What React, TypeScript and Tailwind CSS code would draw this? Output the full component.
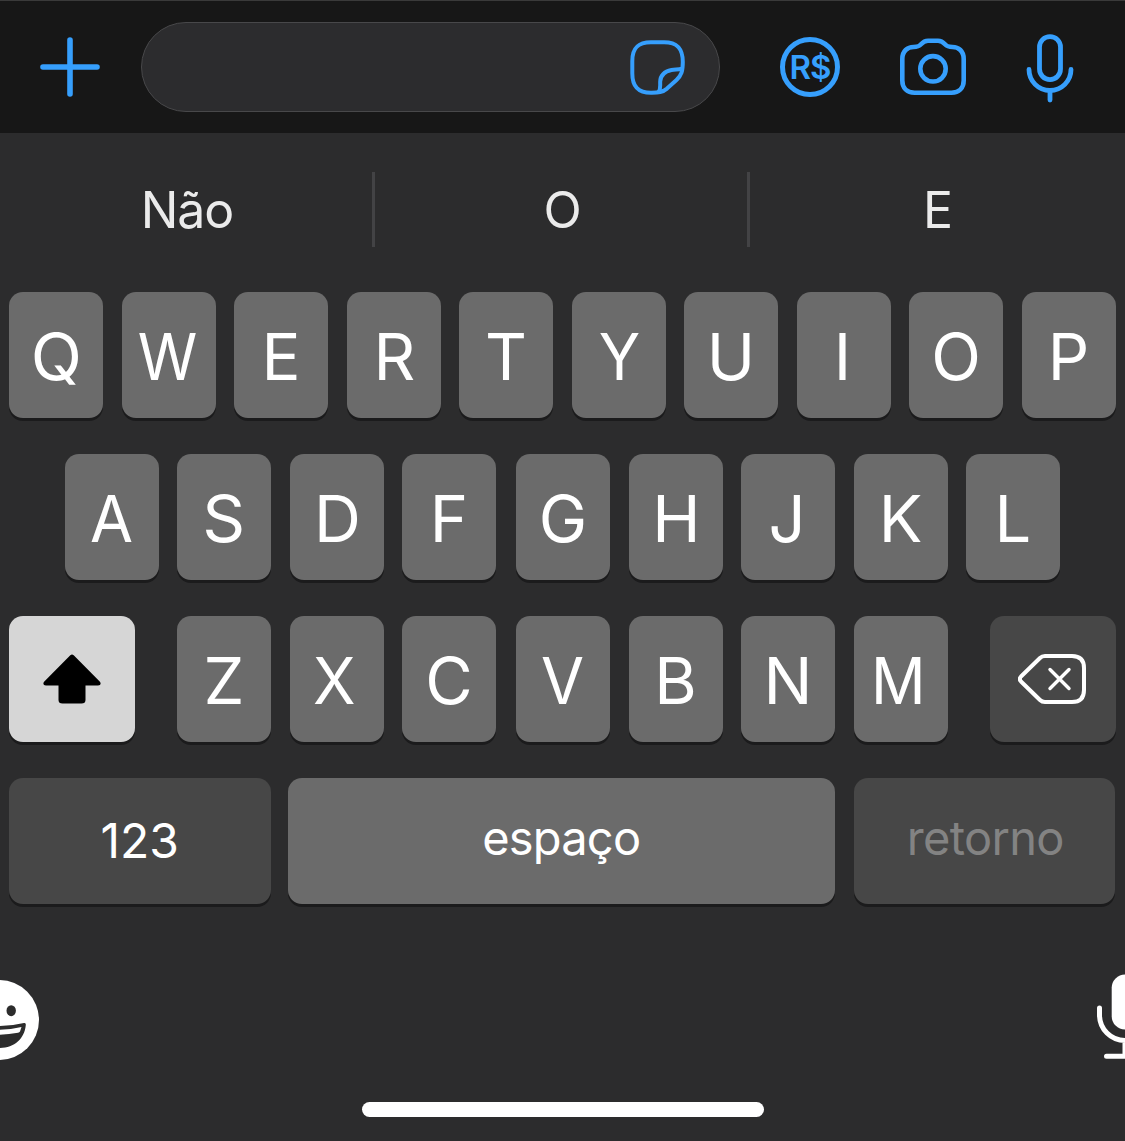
import { ReactNode } from "react";
import clsx from "clsx";

const suggestions = ["Não", "O", "E"];
const topRow = ["Q", "W", "E", "R", "T", "Y", "U", "I", "O", "P"];

const glyphAdjust: Record<string, string> = {
  Q: "translate-x-[0.5px] scale-x-[1.03]",
  W: "-translate-x-[0.5px] scale-x-[0.93]",
  R: "translate-x-px",
  Y: "translate-x-[1.5px] scale-x-[0.94]",
  I: "-translate-x-px",
  A: "scale-x-[0.96]",
  S: "scale-x-[1.03]",
  D: "translate-x-px",
  H: "translate-x-px",
  J: "-translate-x-px",
  X: "-translate-x-[2px] scale-x-[0.96]",
  V: "-translate-x-px scale-x-[0.96]",
  M: "-translate-x-[2px] scale-x-[0.93]",
};

interface KeyProps {
  children: ReactNode;
  className?: string;
}

function Key({ children, className }: KeyProps) {
  return (
    <button
      className={clsx(
        "flex h-[126px] shrink-0 items-center justify-center rounded-[14px] shadow-[0_3px_0_#1b1b1c]",
        className
      )}
    >
      {children}
    </button>
  );
}

function LetterKey({ letter }: { letter: string }) {
  return (
    <Key className="w-[94px] bg-[#6b6b6b] pt-[3px] text-[65px] leading-none">
      <span className={glyphAdjust[letter]}>{letter}</span>
    </Key>
  );
}

function LetterGroup({ letters }: { letters: string[] }) {
  return (
    <div className="flex gap-[18.5px]">
      {letters.map((letter) => (
        <LetterKey key={letter} letter={letter} />
      ))}
    </div>
  );
}

function PlusIcon() {
  return (
    <svg width="60" height="60" viewBox="0 0 60 60" fill="none" stroke="currentColor" strokeWidth="5.6" strokeLinecap="round">
      <path d="M30 3v54M3 30h54" />
    </svg>
  );
}

function StickerIcon() {
  return (
    <svg width="56" height="56" viewBox="0 0 56 56" fill="none" stroke="currentColor" strokeWidth="4" strokeLinejoin="round">
      <path d="M52.8 22C52.8 8.5 47.5 2.3 34 2.3H21C7.5 2.3 2.3 8.5 2.3 21V33.5C2.3 47 8.5 52.8 21 52.8C28.5 52.9 32.5 52.3 37 48.6L46.5 40C51.5 35.3 52.8 31 52.8 22Z" />
      <path d="M52 28.8C47.5 30 45.5 29.2 41.5 30C34.5 31.500 30.500 35.500 30.200 41.500C30 46.500 31 48.500 28.500 52.300" />
    </svg>
  );
}

function CameraIcon() {
  return (
    <svg width="66" height="58" viewBox="0 0 66 58" fill="none" stroke="currentColor" strokeWidth="4.6">
      <path d="M2.3 22.500C2.3 14.500 7.5 10.500 13.5 10.500C18 10.500 19 10 21 7.800C23.5 5 25 4.300 28 4.300H38C41 4.300 42.5 5 45 7.800C47 10 48 10.500 52.5 10.500C58.5 10.500 63.7 14.500 63.7 22.500V44C63.7 51.500 59 56.200 51.500 56.200H14.5C7 56.200 2.3 51.500 2.3 44Z" transform="translate(0 -0.5)" />
      <circle cx="33" cy="31.8" r="12.7" />
    </svg>
  );
}

function MicIcon() {
  return (
    <svg width="48" height="70" viewBox="0 0 48 70" fill="none" stroke="currentColor" strokeWidth="4.8" strokeLinecap="round">
      <rect x="13.5" y="2.6" width="21" height="43" rx="10.500" />
      <path d="M3 35.5a21 21 0 0 0 42 0M24 57v9" />
    </svg>
  );
}

function ShiftIcon() {
  return (
    <svg width="58" height="50" viewBox="0 0 58 50" fill="#000">
      <path d="M27.3 1.3Q29 -0.3 30.7 1.3L56.7 27.5C58.5 29.6 57.5 31.5 55 31.5H42.5V46Q42.5 49.5 38.5 49.5H19.500Q15.5 49.5 15.5 46V31.5H3C0.5 31.5 -0.5 29.6 1.3 27.5Z" />
    </svg>
  );
}

function DeleteIcon() {
  return (
    <svg width="68" height="50" viewBox="0 0 68 50" fill="none" stroke="currentColor" strokeLinecap="round" strokeLinejoin="round">
      <path strokeWidth="4" d="M27 2H54Q66 2 66 14V36Q66 48 54 48H27Q24 48 22 46L3 27.5Q0.7 25 3 22.5L22 4Q24 2 27 2Z" />
      <path strokeWidth="3.4" d="M32 15.5l19 19M51 15.5l-19 19" />
    </svg>
  );
}

function EmojiIcon() {
  return (
    <svg width="80" height="80" viewBox="0 0 80 80">
      <circle cx="40" cy="40" r="40" fill="#fff" />
      <ellipse cx="29.5" cy="30.7" rx="4.7" ry="5.5" fill="#2c2c2c" />
      <ellipse cx="52.2" cy="30.7" rx="4.7" ry="5.5" fill="#2c2c2c" />
      <path fill="#2c2c2c" d="M15 43Q40 49 65 43Q67 42.5 66.8 45C65.5 59 55 68 40 68C25 68 14.5 59 13.2 45Q13 42.5 15 43Z" />
      <path fill="#fff" d="M17.5 47Q40 52.5 62.5 47L61 51.5Q60.5 52.5 59 52.8Q40 56.5 21 52.8Q19.5 52.5 19 51.5Z" />
    </svg>
  );
}

function DictationIcon() {
  return (
    <svg width="56" height="86" viewBox="0 0 56 86" fill="none" stroke="currentColor" strokeWidth="5" strokeLinecap="round">
      <rect x="14.7" y="0.5" width="26.6" height="55" rx="13.3" fill="currentColor" stroke="none" />
      <path d="M2.5 34V41a25.5 25.5 0 0 0 51 0V34M28 67v14M9.5 82.2h37" />
    </svg>
  );
}

function Toolbar() {
  return (
    <div className="flex h-[133px] items-start border-t border-[#3a3a3a] bg-[#171717] pl-10 text-[#369ffd]">
      <div className="mt-9">
        <PlusIcon />
      </div>
      <div className="mt-[21px] ml-[41px] flex h-[90px] w-[579px] items-start justify-end rounded-full border border-[#48484a] bg-[#2c2c2e] pt-[17px] pr-[33px]">
        <StickerIcon />
      </div>
      <div className="mt-9 ml-[60px] flex size-[60px] items-center justify-center rounded-full border-[5px] border-current pt-px text-[33px] leading-none font-semibold tracking-[-1px]">
        R$
      </div>
      <div className="mt-9 ml-[60px]">
        <CameraIcon />
      </div>
      <div className="mt-[33px] ml-[60px]">
        <MicIcon />
      </div>
    </div>
  );
}

function Suggestions() {
  return (
    <div className="mt-[39px] flex h-[75px]">
      {suggestions.map((word, index) => (
        <div
          key={word}
          className={clsx(
            "flex w-[375px] items-center justify-center pt-px text-[50px] leading-none tracking-[-1px] text-[#ebebeb]",
            index < 2 && "border-r-[3px] border-[#434345] pl-[2px]"
          )}
        >
          {word}
        </div>
      ))}
    </div>
  );
}

export default function App() {
  return (
    <div className="flex h-[1141px] w-[1125px] flex-col overflow-hidden bg-[#2c2c2d] font-['Inter',sans-serif] text-white">
      <Toolbar />
      <Suggestions />

      <div className="mt-[45px] flex flex-col gap-9">
        <div className="pl-[9px]">
          <LetterGroup letters={topRow} />
        </div>
        <div className="flex gap-5 pl-[64.5px]">
          <LetterGroup letters={["A", "S", "D", "F"]} />
          <LetterGroup letters={["G", "H", "J", "K", "L"]} />
        </div>
        <div className="flex pl-[9px]">
          <Key className="w-[126px] bg-[#d6d6d6]">
            <ShiftIcon />
          </Key>
          <div className="mx-[42px] flex gap-5">
            <LetterGroup letters={["Z", "X", "C"]} />
            <LetterGroup letters={["V", "B", "N", "M"]} />
          </div>
          <Key className="w-[126px] bg-[#474747] pr-[2px]">
            <DeleteIcon />
          </Key>
        </div>
        <div className="flex pl-[9px] text-[47px] leading-none">
          <Key className="w-[261.5px] bg-[#474747] text-[48px]">123</Key>
          <Key className="ml-[17.5px] w-[546.5px] bg-[#6b6b6b] pb-[8px] tracking-[-0.8px]">espaço</Key>
          <Key className="ml-[19px] w-[261.5px] bg-[#474747] pb-[8px] pl-[2px] tracking-[-0.7px] text-[#838383]">retorno</Key>
        </div>
      </div>

      <div className="mt-[70px] flex h-[86px] items-start justify-between">
        <div className="mt-[6px] -ml-[41px]">
          <EmojiIcon />
        </div>
        <div className="-mr-7">
          <DictationIcon />
        </div>
      </div>

      <div className="mt-[42px] ml-[362px] h-[15px] w-[402px] rounded-full bg-white" />
    </div>
  );
}
